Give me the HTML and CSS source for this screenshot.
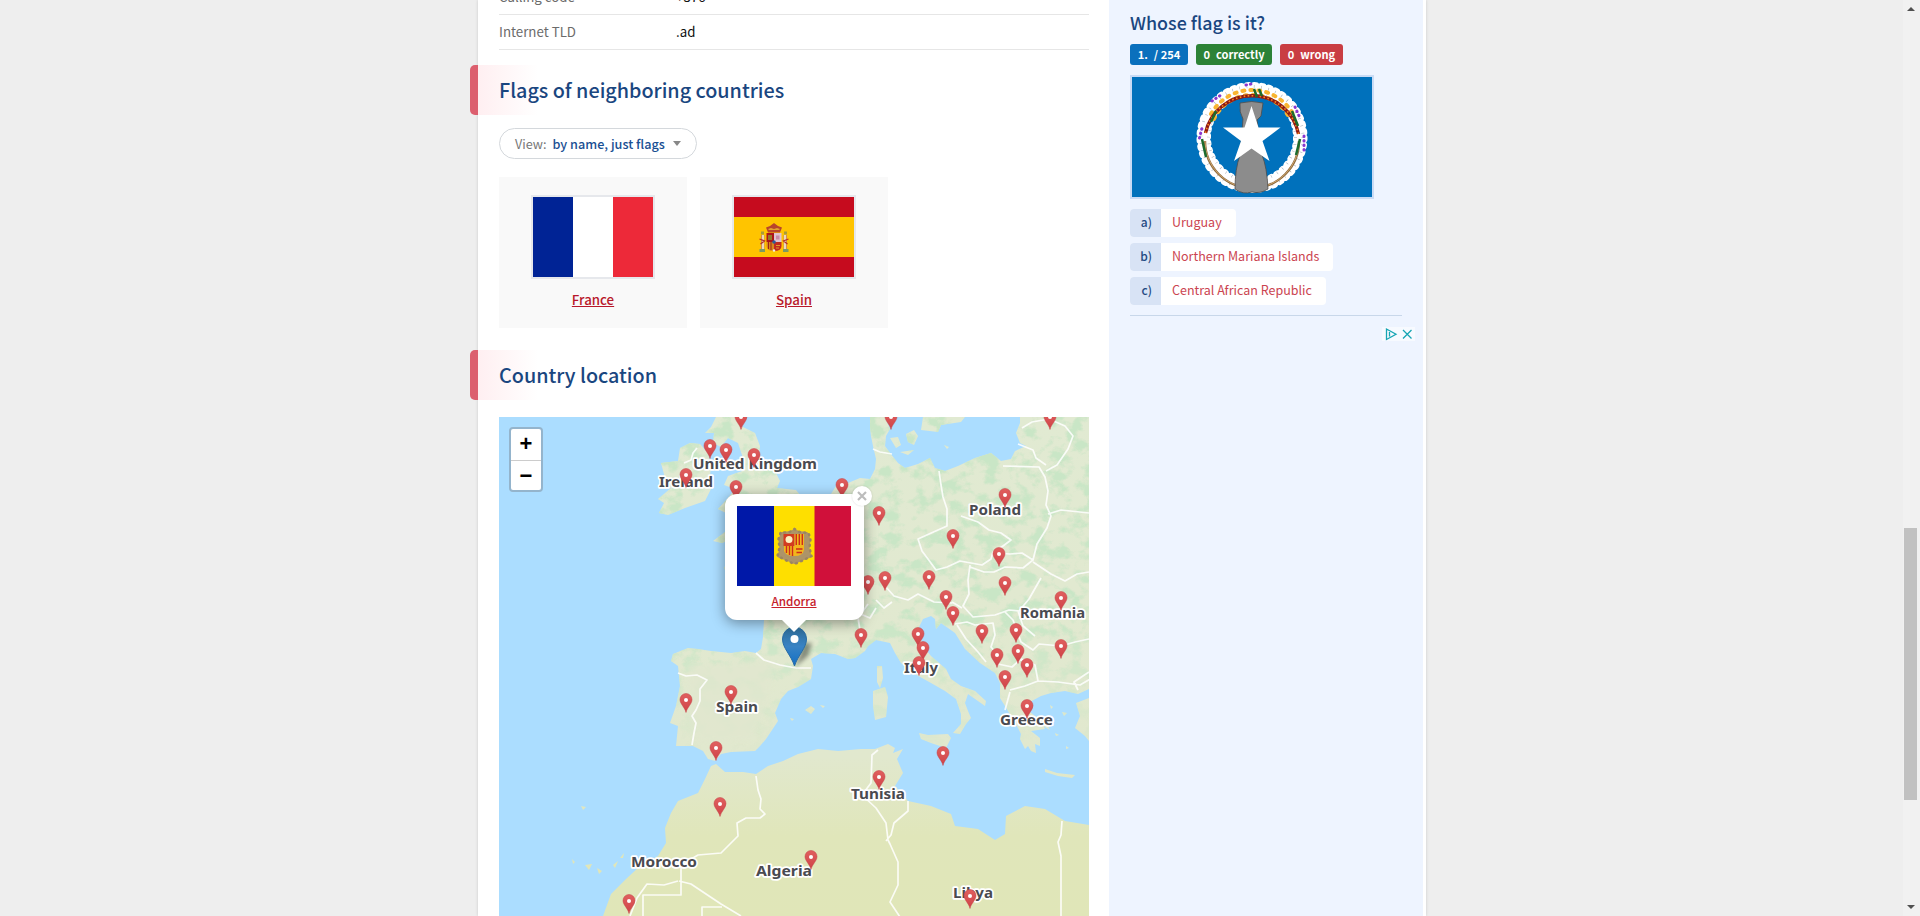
FILE: index.html
```html
<!DOCTYPE html>
<html lang="en">
<head>
<meta charset="utf-8">
<title>Andorra – flags of the world</title>
<link rel="stylesheet" href="styles.css">
</head>
<body>
<div class="viewport">
<div class="page">
  <main class="content">
    <dl class="facts">
      <div class="fact"><dt>Calling code</dt><dd>+376</dd></div>
      <div class="fact"><dt>Internet TLD</dt><dd>.ad</dd></div>
    </dl>
    <h2 class="section-title"><span>Flags of neighboring countries</span></h2>
    <button class="view-select"><span class="view-label">View:</span><span class="view-value">by name, just flags</span><i class="caret"></i></button>
    <div class="cards">
      <div class="card">
        <svg class="flag" viewBox="0 0 120 80" width="120" height="80"><path fill="#002395" d="M0 0h40v80H0z"/><path fill="#fff" d="M40 0h40v80H40z"/><path fill="#ed2939" d="M80 0h40v80H80z"/></svg>
        <a href="#">France</a>
      </div>
      <div class="card">
        <svg class="flag" viewBox="0 0 120 80" width="120" height="80"><path fill="#c60b1e" d="M0 0h120v80H0z"/><path fill="#ffc400" d="M0 20h120v40H0z"/>
          <g><path fill="#d08a5a" d="M27 52V38h3.500v14zM49.500 52V38h3.500v14z"/><path fill="#ead9bd" d="M28 38h2v14h-2zM50 38h2v14h-2z"/><path fill="#7c9a62" d="M25.500 52h5.500v3h-5.500zM49 52h5.500v3H49z"/><path fill="#a89a3c" d="M27 34.500h3v3h-3zM50 34.500h3v3h-3z"/><path fill="none" stroke="#b5332a" stroke-width="1.300" d="M25.500 42l5 2-4 3M54.500 42l-5 2 4 3"/><path fill="#b8452b" d="M34 35.500l-2-5 4-1.500 4-3 4 3 4 1.500-2 5z"/><path fill="#e0a530" d="M34 32l3-1 3 1 3-1 3 1-1 1H35z"/><path fill="#ad1519" d="M32.500 36H40v9h-7.500z"/><path fill="#94772a" d="M34 38h4v5h-4z"/><path fill="#e0c3cf" d="M40 36h7.500v9H40z"/><path fill="#c98ba6" d="M42 38.500h3.500v4H42z"/><path fill="#d7891c" d="M32.500 45H40v9q-7.500 0-7.500-5z"/><path fill="#c22a20" d="M40 45h7.500v4q0 5-7.500 5z"/><path stroke="#9d2318" d="M34.500 45v7M37 45v8"/><path stroke="#e09a28" d="M42 48.500h4M42 51h3"/><circle cx="40" cy="45" r="1.800" fill="#2d5c9b"/><circle cx="40" cy="53.500" r="1.200" fill="#eee"/></g></svg>
        <a href="#">Spain</a>
      </div>
    </div>
    <h2 class="section-title"><span>Country location</span></h2>
    <div class="map">
      <svg class="map-canvas" viewBox="499 417 590 499" width="590" height="499">
        <defs>
          <linearGradient id="land" gradientUnits="userSpaceOnUse" x1="0" y1="417" x2="0" y2="916"><stop offset="0" stop-color="#e1ead2"/><stop offset=".68" stop-color="#e1e8ce"/><stop offset=".84" stop-color="#e0e6ba"/><stop offset="1" stop-color="#e0e6b8"/></linearGradient>
          <linearGradient id="pinFill" x1="0" y1="0" x2="0" y2="1"><stop offset="0" stop-color="#e0605f"/><stop offset="1" stop-color="#cf4247"/></linearGradient>
          <linearGradient id="mainPin" x1="0" y1="0" x2="0" y2="1"><stop offset="0" stop-color="#2e6c97"/><stop offset=".5" stop-color="#3883c4"/><stop offset="1" stop-color="#126fc6"/></linearGradient>
          <linearGradient id="fade" x1="0" y1="0" x2="0" y2="1"><stop offset=".6" stop-color="#fff"/><stop offset="1" stop-color="#000"/></linearGradient>
          <mask id="north"><path fill="url(#fade)" d="M499 417h590v340H499z"/></mask>
          <filter id="woods" x="0" y="0" width="100%" height="100%" color-interpolation-filters="sRGB"><feTurbulence type="fractalNoise" baseFrequency=".06 .075" numOctaves="6" seed="8"/><feColorMatrix values="0 0 0 0 .79  0 0 0 0 .9  0 0 0 0 .775  5 0 0 0 -2.350"/></filter>
          <filter id="blur" x="-30%" y="-30%" width="160%" height="160%"><feGaussianBlur stdDeviation="2"/></filter>
          <path id="coast" d="M870 417L870 426 871 436 873 446 876 459 875 469 870 479 860 478 848 483 836 486 831 494 800 520 770 545 745 545 748 560 724 567 726 573 752 585 764 620 763 637 761 649 756 653 745 651 731 653 711 651 698 649 688 648 673 654 671 661 678 666 680 686 676 706 670 723 678 726 676 746 693 746 703 751 708 759 715 761 721 754 731 752 755 751 760 746 766 739 778 721 775 713 781 699 788 691 798 687 811 679 813 666 811 659 821 653 835 654 848 659 855 658 865 651 868 646 876 640 890 643 895 653 901 663 913 673 931 683 945 691 956 699 961 714 961 724 953 733 960 734 966 724 971 718 968 711 965 703 968 694 985 706 986 701 975 691 961 686 951 679 946 669 931 656 923 646 918 629 923 619 931 616 935 619 936 629 941 623 955 633 965 649 980 663 995 673 1000 683 1000 698 1005 706 1011 716 1018 728 1021 734 1020 739 1025 749 1028 746 1031 751 1036 753 1035 744 1040 746 1040 738 1031 731 1045 729 1041 721 1030 712 1028 703 1041 696 1051 693 1065 691 1078 694 1089 689V417H1020L1020 423 1016 433 1020 443 1026 446 1015 451 1011 459 1001 461 991 453 975 458 958 466 945 471 935 468 930 458 918 464 905 468 898 463 890 453 885 446 886 436 890 429 885 417zM680 448L690 443 700 444 708 453 711 466 710 476 711 489 705 501 685 508 668 515 659 513 664 503 658 499 671 488 660 483 665 478 661 463 678 461zM716 417L711 427 705 433 714 433 713 443 721 447 728 438 738 443 743 458 745 470 728 476 724 485 735 489 728 498 718 509 730 515 725 532 713 541 722 543 780 520 800 495 796 490 777 488 780 481 775 471 765 463 759 455 760 446 755 433 741 426 745 417zM923 417L921 430 938 432 941 425 961 422 965 417zM890 438l8-1 3 8-5 3zM906 434l8-4 4 6-4 9-6-3zM900 452l14-2-6 5zM944 445l5 2-2 2zM877 666h5l1 12-3 10-3-6zM873 691L885 687 888 697 886 717 875 720 873 706zM919 733L928 735 948 734 951 738 946 748 931 743 921 739zM1045 769l12 4 18 2-3 3-14-2-13-4zM805 710l6-4 4 3-4 5zM820 705l5 1-2 2zM1089 698L1076 703 1080 716 1075 728 1085 736 1089 741zM1038 718l8 5 4 7-7-4zM1050 705l3 2-2 2zM1062 712l5 1-3 3zM1055 733l4 2-3 1zM1066 746l3 2-3 1zM790 718l4 1-2 2zM581 806l5 1-3 3zM572 859l3 3-2 2zM585 865l7-1-3 6zM597 868l5 3-3 3zM613 865l5-4-3 7zM620 858l4-5-1 5z"/>
          <path id="africa" d="M875 749L861 749 838 751 818 749 798 754 783 761 768 766 756 774 743 772 725 772 716 764 711 766 705 779 698 793 678 801 671 813 665 828 666 843 658 856 638 868 626 879 611 894 603 916H1089V825L1065 821 1045 809 1025 806 1006 816 1005 834 995 840 978 829 955 826 951 814 931 806 908 801 895 786 903 773 897 759 903 749 893 753 895 748 888 744z"/>
          <clipPath id="landClip"><use href="#coast"/></clipPath>
          <g id="pin"><path fill="url(#pinFill)" stroke="#c43f45" stroke-width=".5" d="M0 .5C-1-4.500-6-8-6-12.500a6 6 0 0 1 12 0C6-8 1-4.500 0 .5z"/><circle cy="-12" r="2" fill="#fff"/></g>
        </defs>
        <path fill="#abddff" d="M499 417h590v499H499z"/>
        <use href="#coast" fill="url(#land)"/>
        <g clip-path="url(#landClip)"><g mask="url(#north)"><path filter="url(#woods)" d="M499 417h590v340H499z"/></g></g>
        <path fill="#e1e7cf" opacity=".75" filter="url(#blur)" d="M688 665L775 660 768 700 752 740 700 742 690 720z"/>
        <use href="#africa" fill="url(#land)"/>
        <g class="borders">
          <path d="M678 673l8 3 11-1 10 5-7 9 0 12-4 9-4 6 4 7-2 10-2 12M756 653l8 7 16 5 16 3 15 0M684 463l7-3 2-7 4-5M873 449l7 3 12 2M939 471l2 14 2 12 4 12 0 17-18 8-11 5 4 12 6 8 8 11 11-3 13-6 22 4 9-6 2-7 10-6 8-6-10-7-12-3-11-8-17-6M996 553l14 1 12-1 11 7 4-16 10-16 4-12-5-11 2-14-3-14-6-10-36-1M1018 444l15 6 3 8 10 7M1022 428l10-6 17-3 16 7 8 10-5 13-11 16-11 6M1048 514l13-4 28 3M970 567l14 5 10 0 11-5 18 1 10-8M1033 562l18 12 14 7 12-7 12-2M970 565l-2 15 1 14-6 12 10 11 22-2 14-5 10 1 10-12 12-21M952 602l10 6M885 586l9 10 14 4 10-6 16 8 18 1M876 600l8 8 8-6M957 625l9 14 12 13 8 10M955 624l12-2 8 3 18-2 2 12-4 12 10 12M1005 612l8 8 8 22 12 8 6-6 22 2 14-4 14-3M1018 611l5 15 12 10M998 664l14 3 9-8 14 6 3 16 20 1 22 3 17-10M1010 690l15-4 13-5M1010 692l-5 18M876 608l-6 10-12-5M868 604l-10 14 2 12-3 10M1078 690l-4-8 15-10"/>
          <path d="M756 776l2 14 3 9-1 10 5 5-5 4-14 0-9 5 1 13-17 17-23 2-10 6-7 6V895h-38v21M679 881l12 3 30 20 20 12M678 881l-14 4-17-1-10 14-7 18M702 916v-9h20M878 750l-6 5-1 28-9 12 14 13 10 15 2 17 2 4 8 18 0 23-8 17 10 15 25 4M908 801v10l-14 12-3 12-5 6M1062 821l-1 14-3 7 3 14v60"/>
        </g>
        <g class="country-names">
          <text x="693" y="469" textLength="124" lengthAdjust="spacingAndGlyphs">United Kingdom</text><text x="659" y="487" textLength="54" lengthAdjust="spacingAndGlyphs">Ireland</text><text x="969" y="515" textLength="52" lengthAdjust="spacingAndGlyphs">Poland</text><text x="1020" y="618" textLength="65" lengthAdjust="spacingAndGlyphs">Romania</text><text x="904" y="673" textLength="34" lengthAdjust="spacingAndGlyphs">Italy</text><text x="716" y="712" textLength="42" lengthAdjust="spacingAndGlyphs">Spain</text><text x="1000" y="725" textLength="53" lengthAdjust="spacingAndGlyphs">Greece</text><text x="851" y="799" textLength="54" lengthAdjust="spacingAndGlyphs">Tunisia</text><text x="631" y="867" textLength="66" lengthAdjust="spacingAndGlyphs">Morocco</text><text x="756" y="876" textLength="56" lengthAdjust="spacingAndGlyphs">Algeria</text><text x="953" y="898" textLength="40" lengthAdjust="spacingAndGlyphs">Libya</text>
        </g>
        <g>
          <use href="#pin" x="741" y="429"/><use href="#pin" x="891" y="429"/><use href="#pin" x="1050" y="429"/><use href="#pin" x="710" y="458"/><use href="#pin" x="726" y="462"/><use href="#pin" x="754" y="467"/><use href="#pin" x="686" y="487"/><use href="#pin" x="736" y="499"/><use href="#pin" x="842" y="497"/><use href="#pin" x="1005" y="507"/><use href="#pin" x="879" y="525"/><use href="#pin" x="953" y="548"/><use href="#pin" x="999" y="566"/><use href="#pin" x="929" y="589"/><use href="#pin" x="885" y="590"/><use href="#pin" x="868" y="594"/><use href="#pin" x="1005" y="595"/><use href="#pin" x="946" y="609"/><use href="#pin" x="1061" y="610"/><use href="#pin" x="953" y="625"/><use href="#pin" x="1016" y="642"/><use href="#pin" x="982" y="643"/><use href="#pin" x="918" y="646"/><use href="#pin" x="861" y="647"/><use href="#pin" x="1061" y="658"/><use href="#pin" x="923" y="660"/><use href="#pin" x="1018" y="663"/><use href="#pin" x="997" y="667"/><use href="#pin" x="919" y="675"/><use href="#pin" x="1027" y="677"/><use href="#pin" x="1005" y="689"/><use href="#pin" x="731" y="704"/><use href="#pin" x="686" y="712"/><use href="#pin" x="1027" y="718"/><use href="#pin" x="716" y="760"/><use href="#pin" x="943" y="765"/><use href="#pin" x="879" y="789"/><use href="#pin" x="720" y="816"/><use href="#pin" x="811" y="869"/><use href="#pin" x="970" y="908"/><use href="#pin" x="629" y="913"/>
        </g>
        <path fill="#000" opacity=".4" filter="url(#blur)" d="M795 667l9-24 8 0-4 13z"/>
        <path fill="url(#mainPin)" stroke="#2a6da5" d="M794.500 666C791 655 782.500 648 782.500 639a12 12 0 0 1 24 0C806.500 648 798 655 794.500 666z"/><circle cx="794.500" cy="639" r="4" fill="#fff"/>
      </svg>
      <div class="zoom"><a>+</a><a>−</a></div>
      <div class="popup">
        <svg viewBox="0 0 114 80" width="114" height="80"><path fill="#0018a8" d="M0 0h37v80H0z"/><path fill="#fedf00" d="M37 0h41v80H37z"/><path fill="#d0103a" d="M77.500 0H114v80H77.500z"/><g transform="translate(57.500 40)"><path fill="#ad9468" stroke="#ad9468" stroke-width="4" stroke-linejoin="round" d="M-12-12l-2 6 1 9-2 7 8 3 7 3 7-3 8-3-2-7 1-9-2-6-8-1-4-2-4 2z"/><path fill="none" stroke="#9c8560" stroke-width="2.500" stroke-linecap="round" stroke-dasharray="1 4.500" d="M-14-13l-2 6 1 9-2 8 10 5 7 3 7-3 10-5-2-8 1-9-2-6-9-1-5-3-5 3z"/><path fill="#d33b20" d="M-11-12H0V0h-11z"/><circle cx="-5.500" cy="-6.500" r="3.500" fill="#fdf0c0"/><path fill="#f2b61c" d="M0-12h9.500V0H0zM-10.500 0H0v10q-9 0-10.500-5zM0 0h9.500v4q-1 6-9.500 6z"/><path stroke="#ce2b1b" stroke-width="1.400" d="M1.800-12V-1M4.800-12V-1M7.800-12V-1M-8 0v7M-5 0v9M-2 0v10M1.500 3h6.500M2 6.500h5.500"/></g></svg>
        <a href="#">Andorra</a>
        <span class="popup-tip"></span>
        <span class="popup-close"><svg viewBox="0 0 10 10" width="10" height="10"><path fill="none" stroke="#bcbcbc" stroke-width="2.200" d="M1 1l8 8M9 1L1 9"/></svg></span>
      </div>
    </div>
  </main>
  <aside class="sidebar">
    <h3>Whose flag is it?</h3>
    <div class="score"><span class="badge total">1.<i></i>/ 254</span><span class="badge good">0<i></i>correctly</span><span class="badge bad">0<i></i>wrong</span></div>
    <svg class="quiz-flag" viewBox="0 0 240 120" width="240" height="120"><path fill="#0071bc" d="M0 0h240v120H0z"/>
      <g fill="none"><circle cx="120" cy="60.500" r="48" stroke="#fff" stroke-width="12"/><circle cx="120" cy="60.500" r="52.500" stroke="#fff" stroke-width="6" stroke-linecap="round" stroke-dasharray="2 5.330"/><circle cx="120" cy="60.500" r="43" stroke="#fff" stroke-width="4" stroke-linecap="round" stroke-dasharray="2 4.750"/><circle cx="120" cy="60.500" r="51" stroke="#9aa3ae" stroke-width="3" stroke-dasharray=".5 6.830"/><circle cx="120" cy="60.500" r="43.500" stroke="#9aa3ae" stroke-width="3" stroke-dasharray=".5 6.330"/><path stroke="#8c6a3c" stroke-width="2.400" d="M73 64A47 47 0 0 0 167 64"/><path stroke="#dcb077" stroke-width=".8" d="M73 64A47 47 0 0 0 167 64"/><path stroke="#f9b530" stroke-width="4" stroke-linecap="round" stroke-dasharray="2 6" d="M79 37A47 47 0 0 1 161 37M82 42A42 42 0 0 1 158 42"/><path stroke="#8e1913" stroke-width="3.400" d="M73.500 56A47.500 47.500 0 0 1 166.500 57"/><path stroke="#f58a1c" stroke-width="1.600" stroke-dasharray="1.600 2.400" d="M73.500 56A47.500 47.500 0 0 1 166.500 57"/><path stroke="#8a37cf" stroke-width="3" stroke-linecap="round" stroke-dasharray=".5 4" d="M67.500 61l3-12M80 24l9-6M114 8l5-1M163 30l5 11M172 59l0 14"/><path stroke="#1c6b2d" stroke-width="2.500" d="M70 62l4 18M168 62l-4 16M122 12l3 8M127 12l3 7M160 34l6 15M79 45l5-11"/></g>
      <path fill="#8c8c8c" stroke="#4d4d4d" stroke-width=".8" d="M108 26q12-3 23 0l-2 13-4 4 5 35q5 12 6 34-8 5-16 3-9 3-17-3 0-20 5-34l3-36q-4-7-3-15z"/><path fill="#fff" d="M119.500 29l7 21.500h22l-18 13.500 7 20-18-12.500L102 84l7-20-18-13.500h21.500z"/></svg>
    <ol class="answers">
      <li><b>a)</b><a>Uruguay</a></li>
      <li><b>b)</b><a>Northern Mariana Islands</a></li>
      <li><b>c)</b><a>Central African Republic</a></li>
    </ol>
    <div class="ad-bar"><svg viewBox="0 0 33 14" width="33" height="14"><path fill="#f7faff" d="M0 0h33v14H0z"/><g fill="none" stroke="#16a5b4" stroke-width="1.300"><path d="M4.500 2v10.500L14 7.200 4.500 2zM7.500 5v4.500"/><path d="M21 3l8.500 8.500M29.500 3L21 11.500"/></g></svg></div>
  </aside>
</div>
<div class="scrollbar"><i class="up"></i><span class="thumb"></span><i class="down"></i></div>
</div>
</body>
</html>
```
FILE: styles.css
```css
* { box-sizing: border-box; }
body { margin: 0; background: #eee; font: 14px/20px "Noto Sans CJK SC", "Noto Sans", sans-serif; color: #111; overflow: hidden; }
a { color: #b8182a; }
.viewport { height: 916px; overflow: hidden; display: flex; justify-content: flex-end; }
.page { width: 948px; height: 916px; margin-right: 494px; display: flex; background: #fff; box-shadow: 0 0 3px rgba(0,0,0,.15); }
.content { width: 631px; padding: 0 20px 0 21px; }
.facts { margin: -20px 0 0; }
.fact { display: flex; height: 35px; align-items: center; border-bottom: 1px solid #e6e6e6; font-size: 13.300px; }
.fact dt { width: 177px; color: #6b6b6b; }
.fact dd { margin: 0; }
.section-title { display: flex; align-items: center; height: 50px; margin: 15px 0 0 -29px; padding-left: 21px; border-left: 8px solid #dc5f6e; border-radius: 5px 0 0 5px; background: linear-gradient(90deg, #ffeff1, #fff 60px); color: #1a4680; font-size: 19.750px; font-weight: 500; }
.view-select { display: flex; align-items: center; width: 198px; height: 31px; margin: 13px 0 18px; padding: 0 15px; border: 1px solid #d4d8dc; border-radius: 16px; background: #fff; font: 500 12.650px/18px "Noto Sans CJK SC", sans-serif; white-space: nowrap; }
.view-label { color: #777; font-weight: 400; margin-right: 6px; }
.view-value { color: #1a4f93; }
.caret { margin-left: auto; border: 4px solid transparent; border-top: 5px solid #888; border-bottom: 0; }
.cards { display: flex; gap: 13px; margin-bottom: 22px; }
.card { display: flex; flex-direction: column; align-items: center; width: 188px; height: 151px; padding-top: 18px; background: #f9f9f9; font-size: 13.300px; font-weight: 500; }
.flag { box-sizing: content-box; border: 2px solid #e6e8ec; margin-bottom: 11px; }
.cards + .section-title { margin-top: 0; margin-bottom: 17px; }
.map { position: relative; width: 590px; height: 499px; overflow: hidden; }
.map-canvas { display: block; }
.borders { fill: none; stroke: #fff; stroke-width: 1.700; stroke-linejoin: round; opacity: .85; }
.country-names { font: 700 15px "Noto Sans", sans-serif; fill: #4a4a50; stroke: #fff; stroke-width: 3.500px; paint-order: stroke; stroke-linejoin: round; }
.zoom { position: absolute; left: 10px; top: 10px; width: 34px; height: 65px; border: 2px solid #94b4cc; border-radius: 4px; background: #fff; }
.zoom a { display: block; height: 31px; color: #000; font: 700 22px/30px "Liberation Sans", sans-serif; text-align: center; }
.zoom a + a { border-top: 1px solid #ccc; }
.popup { position: absolute; left: 226px; top: 77px; width: 139px; height: 126px; padding: 12px 1px 0 0; border-radius: 12px; background: #fff; box-shadow: 0 3px 14px rgba(0,0,0,.4); display: flex; flex-direction: column; align-items: center; gap: 5px; font-size: 11.700px; font-weight: 500; }
.popup a { color: #c6212c; }
.popup-tip { position: absolute; left: 56px; top: 125px; border: 13px solid transparent; border-top-color: #fff; border-bottom: 0; }
.popup-close { position: absolute; right: -8px; top: -8px; width: 20px; height: 20px; border-radius: 50%; background: #fff; display: flex; align-items: center; justify-content: center; box-shadow: 0 0 2px rgba(0,0,0,.15); }
.sidebar { width: 314px; padding: 12px 21px 0; background: #eef4ff; }
.sidebar h3 { margin: 0 0 12px; color: #1a4680; font-size: 17.900px; line-height: 20px; font-weight: 500; }
.score { display: flex; gap: 8px; margin-bottom: 10px; }
.badge { height: 21px; border-radius: 3px; color: #fff; font-size: 11.100px; line-height: 20px; font-weight: 700; text-align: center; white-space: nowrap; }
.badge i { display: inline-block; width: 6px; }
.total { width: 58px; background: #0a70bd; }
.good { width: 76px; background: #2c8237; }
.bad { width: 63px; background: #c93d43; }
.quiz-flag { display: block; box-sizing: content-box; border: 2px solid #c9dbf5; }
.answers { list-style: none; margin: 10px 0; padding: 0 0 10px; border-bottom: 1px solid #c8d7ea; display: flex; flex-direction: column; align-items: flex-start; gap: 6px; }
.answers li { display: flex; height: 28px; border-radius: 4px; overflow: hidden; background: #fff; line-height: 26px; font-size: 12.500px; }
.answers b { width: 31px; padding-right: 9px; background: #d8e3f5; color: #1f4a82; font-size: 12px; font-weight: 500; text-align: right; }
.answers a { padding: 0 14px 0 11px; color: #cb4450; white-space: nowrap; }
.ad-bar { display: flex; justify-content: flex-end; margin: 11px -13px 0 0; }
.scrollbar { position: absolute; right: 0; top: 0; width: 17px; height: 916px; background: #f1f1f1; display: flex; flex-direction: column; align-items: center; padding: 7px 2px 7px 0; }
.scrollbar i { border: 4px solid transparent; }
.up { border-bottom-color: #505050 !important; border-top: 0 !important; }
.down { border-top-color: #505050 !important; border-bottom: 0 !important; margin-top: auto; }
.thumb { width: 13px; height: 272px; margin-top: 517px; background: #c1c1c1; }
```
